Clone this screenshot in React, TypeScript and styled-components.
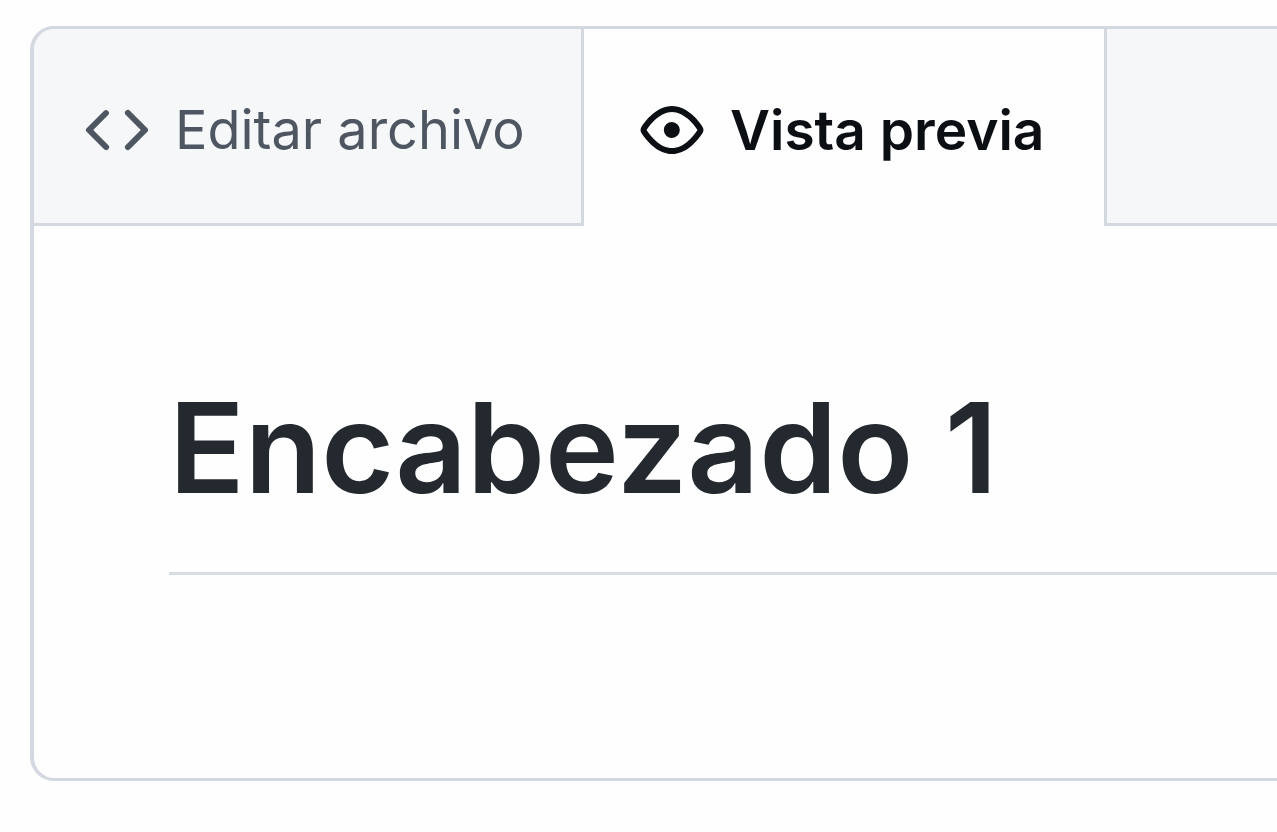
import React from "react";
import styled, { createGlobalStyle } from "styled-components";

const Global = createGlobalStyle`
  * { box-sizing: border-box; }
  body {
    margin: 0;
    background: #fefefe;
    overflow-x: hidden;
    font-family: Inter, "Liberation Sans", sans-serif;
  }
`;

const Page = styled.main`
  padding: 26px 0 51px 30px;
`;

const Panel = styled.section`
  border: 3px solid #d3d8e1;
  border-left-width: 4px;
  border-right: 0;
  border-radius: 24px 0 0 24px;
  background: #fefefe;
  overflow: hidden;
`;

const TabBar = styled.div`
  display: flex;
  height: 197px;
  background: #f5f7f9;
`;

const Tab = styled.button<{ $active?: boolean }>`
  display: flex;
  align-items: center;
  gap: 26px;
  flex: none;
  width: ${(p) => (p.$active ? "526px" : "547px")};
  padding: ${(p) => (p.$active ? "8px 0 3px 56px" : "8px 0 0 51px")};
  border: 0 solid #d3d8e1;
  border-width: ${(p) => (p.$active ? "0 3px" : "0 0 3px")};
  background: ${(p) => (p.$active ? "#fefefe" : "transparent")};
  color: ${(p) => (p.$active ? "#0b0e13" : "#4d5661")};
  font-family: inherit;
  font-size: ${(p) => (p.$active ? "55px" : "54px")};
  font-weight: ${(p) => (p.$active ? 600 : 400)};
  line-height: 64px;
  white-space: nowrap;
`;

const TabFill = styled.div`
  flex: 1;
  border-bottom: 3px solid #d3d8e1;
`;

const Icon = styled.svg`
  flex: none;
  width: 64px;
  height: 64px;
`;

const Preview = styled.article`
  padding: 142px 0 203px 135px;
`;

const Heading = styled.h1`
  margin: 0;
  padding-bottom: 44px;
  border-bottom: 3px solid #d8dce5;
  color: #24292f;
  font-size: 125px;
  font-weight: 600;
  line-height: 160px;
  white-space: nowrap;
`;

export default function App() {
  return (
    <>
      <Global />
      <Page>
        <Panel>
          <TabBar role="tablist">
            <Tab role="tab" aria-selected={false}>
              <Icon viewBox="0 0 16 16" fill="currentColor" aria-hidden="true">
                <path d="M4.72 3.22a.75.75 0 0 1 1.06 1.06L2.06 8l3.72 3.72a.75.75 0 1 1-1.06 1.06L.47 8.53a.75.75 0 0 1 0-1.06l4.25-4.25Zm6.56 0a.75.75 0 1 0-1.06 1.06L13.94 8l-3.72 3.72a.75.75 0 1 0 1.06 1.06l4.25-4.25a.75.75 0 0 0 0-1.06l-4.25-4.25Z" />
              </Icon>
              Editar archivo
            </Tab>
            <Tab role="tab" aria-selected $active>
              <Icon viewBox="0 0 16 16" fill="currentColor" aria-hidden="true">
                <path d="M8 2c1.981 0 3.671.992 4.933 2.078 1.27 1.091 2.187 2.345 2.637 3.023a1.62 1.62 0 0 1 0 1.798c-.45.678-1.367 1.932-2.637 3.023C11.67 13.008 9.981 14 8 14c-1.981 0-3.671-.992-4.933-2.078C1.797 10.83.88 9.576.43 8.898a1.62 1.62 0 0 1 0-1.798c.45-.677 1.367-1.931 2.637-3.022C4.33 2.992 6.019 2 8 2ZM1.679 7.932a.12.12 0 0 0 0 .136c.411.622 1.241 1.75 2.366 2.717C5.176 11.758 6.527 12.5 8 12.5c1.473 0 2.825-.742 3.955-1.715 1.124-.967 1.954-2.096 2.366-2.717a.12.12 0 0 0 0-.136c-.412-.621-1.242-1.75-2.366-2.717C10.824 4.242 9.473 3.5 8 3.5c-1.473 0-2.825.742-3.955 1.715-1.124.967-1.954 2.096-2.366 2.717ZM8 10a2 2 0 1 1-.001-3.999A2 2 0 0 1 8 10Z" />
              </Icon>
              Vista previa
            </Tab>
            <TabFill />
          </TabBar>
          <Preview>
            <Heading>Encabezado 1</Heading>
          </Preview>
        </Panel>
      </Page>
    </>
  );
}
